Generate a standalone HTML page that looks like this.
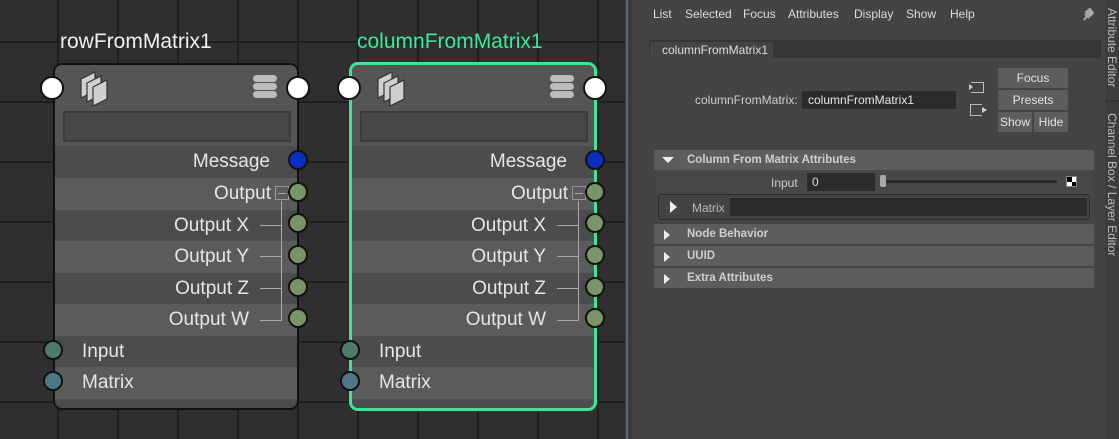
<!DOCTYPE html>
<html><head><meta charset="utf-8"><style>
*{margin:0;padding:0;box-sizing:border-box}
body{width:1119px;height:439px;overflow:hidden;background:#2f2f2f;font-family:"Liberation Sans",sans-serif;position:relative}
.grid{position:absolute;left:0;top:0;width:625px;height:439px;
background-image:linear-gradient(#1f1f1f,#1f1f1f),linear-gradient(#1f1f1f,#1f1f1f);}
.abs{position:absolute}
.w{position:absolute;left:0;top:0;width:625px;height:439px}
.node{position:absolute;left:53px;top:63px;width:246px;height:347px;border:2px solid #111;border-radius:9px;background:#4c4c4c;overflow:hidden}
.row{position:absolute;left:0;width:100%;height:32px;font-size:19px;color:#e6e6e6;line-height:32px}
.l{background:#5b5b5b}.d{background:#4c4c4c}
.port{position:absolute;width:20px;height:20px;border-radius:50%;border:2px solid #111;background:#7a9469}
.title{position:absolute;top:30px;font-size:21px;color:#f0f0f0}
.menu span{position:absolute;top:7px;font-size:12px;color:#ddd}
.btn{position:absolute;background:#5d5d5d;color:#e4e4e4;font-size:12px;text-align:center;line-height:20px;height:20px}
.sec{position:absolute;left:654px;width:440px;height:20px;background:#5d5d5d;border-radius:2px;color:#cfcfcf;font-size:11.5px;font-weight:bold;line-height:20px}
.sec i{position:absolute;left:10px;top:6px;width:0;height:0;border-top:5px solid transparent;border-bottom:5px solid transparent;border-left:6px solid #eee}
.sec span{position:absolute;left:33px}
</style></head><body>
<svg class="abs" style="left:0;top:0" width="626" height="439">
<g stroke="#1e1e1e" stroke-width="2">
<line x1="58" y1="0" x2="58" y2="439"/><line x1="118" y1="0" x2="118" y2="439"/><line x1="178" y1="0" x2="178" y2="439"/><line x1="238" y1="0" x2="238" y2="439"/><line x1="298" y1="0" x2="298" y2="439"/><line x1="358" y1="0" x2="358" y2="439"/><line x1="418" y1="0" x2="418" y2="439"/><line x1="478" y1="0" x2="478" y2="439"/><line x1="538" y1="0" x2="538" y2="439"/><line x1="598" y1="0" x2="598" y2="439"/>
<line x1="0" y1="42" x2="626" y2="42"/><line x1="0" y1="102" x2="626" y2="102"/><line x1="0" y1="162" x2="626" y2="162"/><line x1="0" y1="222" x2="626" y2="222"/><line x1="0" y1="282" x2="626" y2="282"/><line x1="0" y1="342" x2="626" y2="342"/><line x1="0" y1="402" x2="626" y2="402"/>
</g></svg>

<!-- node 1 -->
<div class="w" id="n1">
<div class="title" style="left:60px">rowFromMatrix1</div>
<div class="node">
 <div class="abs" style="left:0;top:0;width:100%;height:82px;background:#555"></div>
 <svg class="abs" style="left:23px;top:4px" width="34" height="40"><g fill="#cfcfcf" stroke="#333" stroke-width="1.2"><polygon points="3,10 17,3 17,22 3,29"/><polygon points="9,14 23,7 23,26 9,33"/><polygon points="15,18 29,11 29,30 15,37"/></g></svg>
 <div class="abs" style="left:198px;top:10px;width:24px;height:7px;border-radius:4px;background:#bdbdbd"></div>
 <div class="abs" style="left:198px;top:18px;width:24px;height:7px;border-radius:4px;background:#bdbdbd"></div>
 <div class="abs" style="left:198px;top:26px;width:24px;height:7px;border-radius:4px;background:#bdbdbd"></div>
 <div class="abs" style="left:8px;top:46px;width:228px;height:31px;background:#474747;border:2px solid #3b3b3b"></div>
 <div class="row d" style="top:81px"><span class="abs" style="right:27px">Message</span></div>
 <div class="row l" style="top:113px"><span class="abs" style="right:26px">Output</span><div class="abs" style="left:220px;top:8px;width:14px;height:14px;border:1px solid #999"><div class="abs" style="left:2px;top:6px;width:8px;height:1px;background:#aaa"></div></div></div>
 <div class="row d" style="top:145px"><span class="abs" style="right:48px">Output X</span></div>
 <div class="row l" style="top:176px"><span class="abs" style="right:48px">Output Y</span></div>
 <div class="row d" style="top:208px"><span class="abs" style="right:48px">Output Z</span></div>
 <div class="row l" style="top:239px"><span class="abs" style="right:48px">Output W</span></div>
 <div class="row d" style="top:271px"><span class="abs" style="left:27px">Input</span></div>
 <div class="row l" style="top:302px"><span class="abs" style="left:27px">Matrix</span></div>
 <div class="abs" style="left:226px;top:136px;width:1px;height:120px;background:#aaa"></div>
 <div class="abs" style="left:205px;top:160px;width:21px;height:1px;background:#aaa"></div>
 <div class="abs" style="left:205px;top:191px;width:21px;height:1px;background:#aaa"></div>
 <div class="abs" style="left:205px;top:223px;width:21px;height:1px;background:#aaa"></div>
 <div class="abs" style="left:205px;top:255px;width:21px;height:1px;background:#aaa"></div>
</div>
<div class="port" style="left:40px;top:76px;width:24px;height:24px;background:#fff"></div>
<div class="port" style="left:286px;top:76px;width:24px;height:24px;background:#fff"></div>
<div class="port" style="left:288px;top:150px;background:#0a2fc0"></div>
<div class="port" style="left:288px;top:182px"></div>
<div class="port" style="left:288px;top:213px"></div>
<div class="port" style="left:288px;top:245px"></div>
<div class="port" style="left:288px;top:277px"></div>
<div class="port" style="left:288px;top:308px"></div>
<div class="port" style="left:43px;top:340px;background:#4f7a6f"></div>
<div class="port" style="left:43px;top:371px;background:#4e7888"></div>
</div>

<!-- node 2 -->
<div class="w" style="left:297px">
<div class="title" style="left:60px;color:#3fe89c">columnFromMatrix1</div>
<div class="node" style="border:3px solid #3de597;left:52px;top:62px;width:248px;height:349px">
 <div class="abs" style="left:0;top:0;width:100%;height:82px;background:#555"></div>
 <svg class="abs" style="left:23px;top:4px" width="34" height="40"><g fill="#cfcfcf" stroke="#333" stroke-width="1.2"><polygon points="3,10 17,3 17,22 3,29"/><polygon points="9,14 23,7 23,26 9,33"/><polygon points="15,18 29,11 29,30 15,37"/></g></svg>
 <div class="abs" style="left:198px;top:10px;width:24px;height:7px;border-radius:4px;background:#bdbdbd"></div>
 <div class="abs" style="left:198px;top:18px;width:24px;height:7px;border-radius:4px;background:#bdbdbd"></div>
 <div class="abs" style="left:198px;top:26px;width:24px;height:7px;border-radius:4px;background:#bdbdbd"></div>
 <div class="abs" style="left:8px;top:46px;width:228px;height:31px;background:#474747;border:2px solid #3b3b3b"></div>
 <div class="row d" style="top:81px"><span class="abs" style="right:27px">Message</span></div>
 <div class="row l" style="top:113px"><span class="abs" style="right:26px">Output</span><div class="abs" style="left:220px;top:8px;width:14px;height:14px;border:1px solid #999"><div class="abs" style="left:2px;top:6px;width:8px;height:1px;background:#aaa"></div></div></div>
 <div class="row d" style="top:145px"><span class="abs" style="right:48px">Output X</span></div>
 <div class="row l" style="top:176px"><span class="abs" style="right:48px">Output Y</span></div>
 <div class="row d" style="top:208px"><span class="abs" style="right:48px">Output Z</span></div>
 <div class="row l" style="top:239px"><span class="abs" style="right:48px">Output W</span></div>
 <div class="row d" style="top:271px"><span class="abs" style="left:27px">Input</span></div>
 <div class="row l" style="top:302px"><span class="abs" style="left:27px">Matrix</span></div>
 <div class="abs" style="left:226px;top:136px;width:1px;height:120px;background:#aaa"></div>
 <div class="abs" style="left:205px;top:160px;width:21px;height:1px;background:#aaa"></div>
 <div class="abs" style="left:205px;top:191px;width:21px;height:1px;background:#aaa"></div>
 <div class="abs" style="left:205px;top:223px;width:21px;height:1px;background:#aaa"></div>
 <div class="abs" style="left:205px;top:255px;width:21px;height:1px;background:#aaa"></div>
</div>
<div class="port" style="left:40px;top:76px;width:24px;height:24px;background:#fff"></div>
<div class="port" style="left:286px;top:76px;width:24px;height:24px;background:#fff"></div>
<div class="port" style="left:288px;top:150px;background:#0a2fc0"></div>
<div class="port" style="left:288px;top:182px"></div>
<div class="port" style="left:288px;top:213px"></div>
<div class="port" style="left:288px;top:245px"></div>
<div class="port" style="left:288px;top:277px"></div>
<div class="port" style="left:288px;top:308px"></div>
<div class="port" style="left:43px;top:340px;background:#4f7a6f"></div>
<div class="port" style="left:43px;top:371px;background:#4e7888"></div>
</div>

<!-- separator -->
<div class="abs" style="left:625px;top:0;width:7px;height:439px;background:#3a3a3a"></div>
<div class="abs" style="left:626px;top:0;width:2px;height:439px;background:#5a6a7a"></div>
<div class="abs" style="left:634px;top:40px;width:1px;height:399px;background:#6a7a8a"></div>

<!-- right panel -->
<div class="abs" style="left:632px;top:0;width:487px;height:439px;background:#444"></div>
<div class="abs" style="left:636px;top:0;width:470px;height:439px;background:#444"></div>
<div class="menu"><span style="left:653px">List</span><span style="left:685px">Selected</span><span style="left:743px">Focus</span><span style="left:788px">Attributes</span><span style="left:854px">Display</span><span style="left:906px">Show</span><span style="left:950px">Help</span></div>
<svg class="abs" style="left:1081px;top:8px" width="14" height="14"><path d="M3 12 L6 8 M5 4 L9 1 L12 5 L9 8 Z M4 6 L8 10" stroke="#aaa" stroke-width="2" fill="#aaa"/></svg>
<div class="abs" style="left:649px;top:40px;width:452px;height:18px;background:#363636"></div>
<div class="abs" style="left:650px;top:42px;width:123px;height:17px;background:#444;color:#ddd;font-size:12px;padding-left:12px;line-height:17px">columnFromMatrix1</div>
<div class="abs" style="left:695px;top:93px;font-size:12px;color:#ccc">columnFromMatrix:</div>
<div class="abs" style="left:802px;top:91px;width:154px;height:18px;background:#2b2b2b;border-radius:2px;color:#e6e6e6;font-size:12px;line-height:18px;padding-left:6px">columnFromMatrix1</div>
<div class="abs" style="left:971px;top:82px;width:13px;height:11px;border:1px solid #bbb;border-left:none"></div>
<div class="abs" style="left:969px;top:84px;border-top:3px solid transparent;border-bottom:3px solid transparent;border-left:4px solid #ccc"></div>
<div class="abs" style="left:970px;top:104px;width:12px;height:12px;border:1px solid #bbb;border-right:none;border-top:1px solid #bbb"></div>
<div class="abs" style="left:982px;top:107px;border-top:3px solid transparent;border-bottom:3px solid transparent;border-left:5px solid #ccc"></div>
<div class="btn" style="left:998px;top:68px;width:70px">Focus</div>
<div class="btn" style="left:998px;top:90px;width:70px">Presets</div>
<div class="btn" style="left:998px;top:112px;width:34px">Show</div>
<div class="btn" style="left:1034px;top:112px;width:34px">Hide</div>

<div class="sec" style="top:150px"><i style="border:none;border-left:6px solid transparent;border-right:6px solid transparent;border-top:6px solid #eee;left:8px;top:7px"></i><span>Column From Matrix Attributes</span></div>
<div class="abs" style="left:657px;top:170px;width:435px;height:52px;background:#484848"></div>
<div class="abs" style="left:771px;top:176px;font-size:12px;color:#ccc">Input</div>
<div class="abs" style="left:807px;top:173px;width:68px;height:18px;background:#2b2b2b;color:#ddd;font-size:12px;line-height:19px;padding-left:5px">0</div>
<div class="abs" style="left:880px;top:180px;width:177px;height:3px;background:#2a2a2a;border-radius:2px"></div>
<div class="abs" style="left:880px;top:175px;width:6px;height:12px;background:#aaa;border-radius:2px"></div>
<div class="abs" style="left:1066px;top:176px;width:11px;height:11px;background:#fff;border:1px solid #888"><div class="abs" style="left:0;top:0;width:5px;height:5px;background:#000"></div><div class="abs" style="left:5px;top:5px;width:4px;height:4px;background:#000"></div></div>
<div class="abs" style="left:658px;top:194px;width:432px;height:26px;border:1px solid #2a2a2a;border-radius:3px;background:#444"></div>
<div class="abs" style="left:670px;top:201px;border-top:6px solid transparent;border-bottom:6px solid transparent;border-left:7px solid #eee"></div>
<div class="abs" style="left:692px;top:201px;font-size:12px;color:#bbb">Matrix</div>
<div class="abs" style="left:730px;top:198px;width:357px;height:18px;background:#2b2b2b;border-radius:2px"></div>
<div class="sec" style="top:224px"><i></i><span>Node Behavior</span></div>
<div class="sec" style="top:246px"><i></i><span>UUID</span></div>
<div class="sec" style="top:268px"><i></i><span>Extra Attributes</span></div>

<!-- side tabs -->
<div class="abs" style="left:1105px;top:0;width:14px;height:439px;background:#3d3d3d"></div>
<div class="abs" style="left:1105px;top:100px;width:14px;height:2px;background:#333"></div>
<div class="abs" style="left:1105px;top:248px;width:14px;height:2px;background:#333"></div>
<div class="abs" style="left:1119px;top:8px;transform-origin:0 0;transform:rotate(90deg);font-size:12px;color:#bbb;white-space:nowrap">Attribute Editor</div>
<div class="abs" style="left:1119px;top:113px;transform-origin:0 0;transform:rotate(90deg);font-size:12px;color:#bbb;white-space:nowrap">Channel Box / Layer Editor</div>
</body></html>
